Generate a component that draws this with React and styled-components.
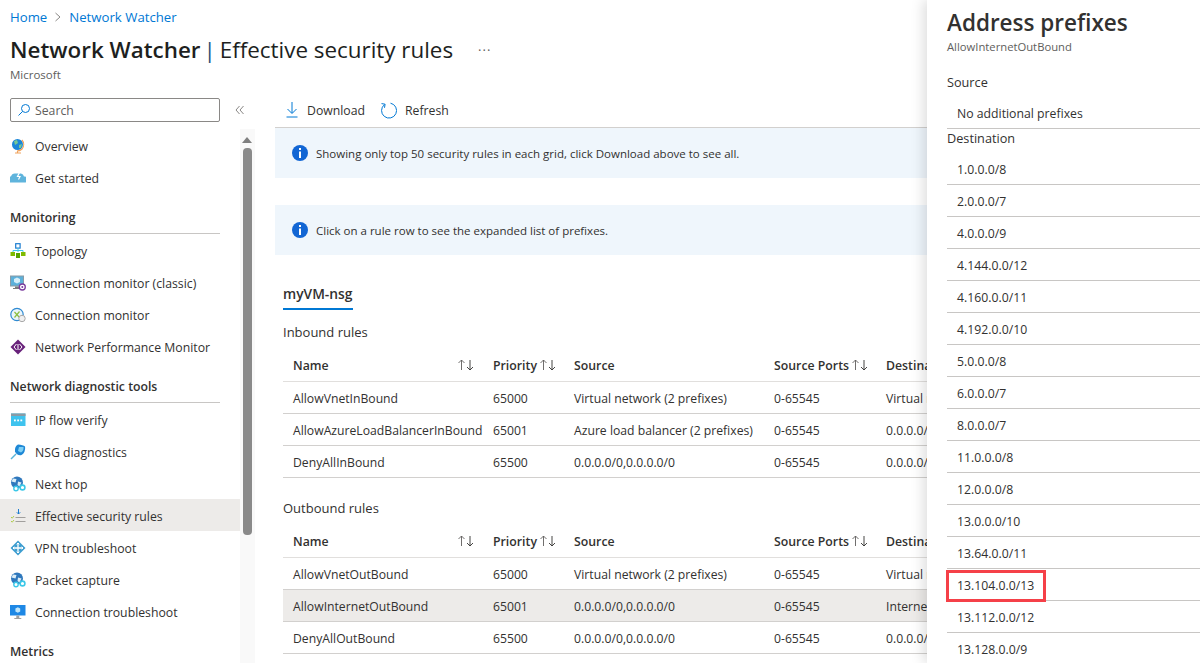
import React from "react";
import styled, { createGlobalStyle } from "styled-components";

const Global = createGlobalStyle`
  html, body { margin: 0; padding: 0; height: 100%; overflow: hidden; background: #fff; }
  body { font-family: "Open Sans", "Noto Sans", "Liberation Sans", sans-serif; font-size: 12.25px; color: #323130; }
`;

const Page = styled.div`
  position: relative;
  width: 1200px;
  height: 663px;
  overflow: hidden;
  display: flex;
  flex-direction: column;
`;
const Header = styled.header`
  height: 87px;
  padding: 8px 0 0 10px;
  box-sizing: border-box;
  flex: none;
`;
const Crumbs = styled.div`
  display: flex;
  align-items: center;
  gap: 7px;
  height: 17px;
  color: #0078d4;
  font-size: 13.2px;
`;
const TitleRow = styled.div`
  display: flex;
  align-items: center;
  height: 32px;
  margin-top: 8px;
  font-size: 22.4px;
  color: #201f1e;
  white-space: nowrap;
`;
const TitleStrong = styled.span`
  font-weight: 600;
`;
const TitleBar = styled.span`
  color: #1f4e79;
  margin: 0 4px 0 3px;
  font-weight: 400;
`;
const More = styled.span`
  font-size: 13px;
  letter-spacing: 1px;
  margin-left: 25px;
  color: #605e5c;
  transform: translateY(1px);
`;
const Sub = styled.div`
  font-size: 11.5px;
  color: #605e5c;
  line-height: 15px;
  margin-top: 2px;
`;
const Body = styled.div`
  flex: 1;
  min-height: 0;
  display: flex;
`;
const Side = styled.aside`
  width: 255px;
  flex: none;
  display: grid;
  grid-template-columns: 240px 15px;
  grid-template-rows: 42px 1fr;
`;
const SearchRow = styled.div`
  grid-column: 1 / 3;
  display: flex;
  align-items: flex-start;
  padding: 11px 0 0 10px;
  gap: 15px;
`;
const SearchBox = styled.div`
  width: 210px;
  height: 24px;
  box-sizing: border-box;
  border: 1px solid #8a8886;
  border-radius: 2px;
  display: flex;
  align-items: center;
  gap: 4px;
  padding-left: 6px;
  color: #605e5c;
`;
const Collapse = styled.span`
  display: flex;
  align-items: center;
  height: 24px;
`;
const Nav = styled.nav`
  overflow: hidden;
  display: flex;
  flex-direction: column;
`;
const NavItem = styled.div`
  height: 32px;
  flex: none;
  box-sizing: border-box;
  display: flex;
  align-items: center;
  gap: 9px;
  padding: 2px 0 0 10px;
  background: ${(p) => (p.$active ? "#edebe9" : "transparent")};
  white-space: nowrap;
`;
const NavGroup = styled.div`
  height: 41px;
  flex: none;
  box-sizing: border-box;
  margin: 0 20px 0 10px;
  border-bottom: 1px solid ${(p) => (p.$plain ? "transparent" : "#c8c6c4")};
  display: flex;
  align-items: flex-end;
  padding-bottom: 7px;
  font-weight: 600;
  color: #323130;
`;
const Gutter = styled.div`
  background: #f9f9f9;
  display: flex;
  flex-direction: column;
  align-items: center;
  width: 15px;
`;
const ArrowUp = styled.div`
  width: 0;
  height: 0;
  margin: 8px 0 0 -1px;
  border-left: 5px solid transparent;
  border-right: 5px solid transparent;
  border-bottom: 6px solid #7f7f7f;
`;
const Thumb = styled.div`
  width: 9px;
  height: 387px;
  margin: 5px 0 0 -1px;
  background: #8a8a8a;
  border-radius: 4px;
`;
const Main = styled.main`
  flex: 1;
  min-width: 0;
  padding: 11px 0 0 20px;
  overflow: hidden;
`;
const Toolbar = styled.div`
  height: 30px;
  display: flex;
  align-items: center;
  gap: 15px;
  border-bottom: 1px solid #d2d0ce;
  padding: 0 0 5px 9px;
  box-sizing: border-box;
`;
const ToolBtn = styled.div`
  display: flex;
  align-items: center;
  gap: ${(p) => p.$gap}px;
`;
const Info = styled.div`
  height: 50px;
  background: #eff6fc;
  display: flex;
  align-items: center;
  gap: 8px;
  padding-left: 17px;
  font-size: 11.5px;
  margin-bottom: ${(p) => p.$mb || 0}px;
`;
const TabBar = styled.div`
  padding: 30px 0 0 8px;
  display: flex;
`;
const Tab = styled.div`
  font-weight: 600;
  font-size: 13.8px;
  height: 25px;
  line-height: 18px;
  box-sizing: border-box;
  width: 70px;
  white-space: nowrap;
  border-bottom: 2px solid #0078d4;
`;
const RulesTitle = styled.div`
  margin-left: 8px;
  height: 18px;
  line-height: 18px;
  font-size: 13px;
  margin-top: ${(p) => p.$mt}px;
`;
const Table = styled.div`
  margin: 8px 0 0 8px;
  width: 800px;
`;
const gridCols = "210px 81px 200px 112px 1fr";
const HeadRow = styled.div`
  display: grid;
  grid-template-columns: ${gridCols};
  height: 33px;
  align-items: center;
  border-bottom: 1px solid #e1dfdd;
  box-sizing: border-box;
  font-weight: 600;
  font-size: 12.3px;
`;
const Row = styled.div`
  display: grid;
  grid-template-columns: ${gridCols};
  height: 32px;
  box-sizing: border-box;
  padding-top: 2px;
  align-items: center;
  border-bottom: 1px solid #d2d0ce;
  background: ${(p) => (p.$sel ? "#edebe9" : "transparent")};
  font-size: 12.2px;
  white-space: nowrap;
`;
const Cell = styled.div`
  padding-left: ${(p) => (p.$first ? 10 : 0)}px;
  white-space: nowrap;
  display: flex;
  align-items: center;
  gap: 2px;
  justify-content: ${(p) => (p.$spread ? "space-between" : "flex-start")};
  padding-right: ${(p) => (p.$spread ? 18 : 0)}px;
`;
const Panel = styled.aside`
  position: absolute;
  top: 0;
  right: 0;
  bottom: 0;
  width: 273px;
  box-sizing: border-box;
  background: #fff;
  box-shadow: -4px 0 12px rgba(0, 0, 0, 0.13);
  padding: 7px 0 0 20px;
  overflow: hidden;
`;
const PanelTitle = styled.h2`
  margin: 0;
  font-size: 22.5px;
  font-weight: 600;
  line-height: 32px;
  color: #323130;
`;
const PanelSub = styled.div`
  font-size: 11.25px;
  color: #605e5c;
  line-height: 16px;
`;
const Label = styled.div`
  height: 18px;
  line-height: 18px;
  font-size: 12.7px;
  margin-top: ${(p) => p.$mt}px;
`;
const Prefix = styled.div`
  position: relative;
  height: ${(p) => p.$h || 32}px;
  box-sizing: border-box;
  border-bottom: 1px solid #c8c6c4;
  padding-left: 10px;
  display: flex;
  align-items: center;
  padding-top: ${(p) => p.$pt || 2}px;
`;
const Highlight = styled.div`
  position: absolute;
  left: -1px;
  top: 1px;
  width: 100px;
  height: 32px;
  box-sizing: border-box;
  border: 3px solid #f54048;
`;

const I = ({ children, size = 16 }) => (
  <svg width={size} height={size} viewBox="0 0 16 16" style={{ flex: "none" }}>{children}</svg>
);
const Icons = {
  globe: <I><circle cx="7.5" cy="6.5" r="5.5" fill="#1a86d8"/><path d="M4 3l3-1 1 3-3 2zM9 7l3-1-1 4-2 0z" fill="#76c893"/><path d="M12 2a7 7 0 0 1 0 9 7 7 0 0 1-5 2M7.5 13v2M5 15h6" fill="none" stroke="#f0a35e" strokeWidth="1.2"/></I>,
  cloud: <I><path d="M1 12.5a3 3 0 0 1 0-6 4 4 0 0 1 4-3h6a4 4 0 0 1 3 3 3 3 0 0 1 1 6z" fill="#5fb4dc"/><path d="M9.5 2.5L7.5 6.5h2.5l-1.5 3" stroke="#fff" strokeWidth="1.2" fill="none"/></I>,
  topo: <I><rect x="5.7" y="0.7" width="4.4" height="4.4" fill="#fff" stroke="#1b7cd0" strokeWidth="1.2"/><path d="M8 5v4M3 9V7.5h10V9" stroke="#3cc8e8" fill="none"/><rect x="0.5" y="9" width="4.5" height="4" fill="#7fba00"/><rect x="6" y="10" width="4" height="5" fill="#57a300"/><rect x="11" y="9" width="4.5" height="4" fill="#7fba00"/></I>,
  monClassic: <I><rect x="0" y="0.5" width="14" height="11" fill="#8a9ba5"/><rect x="1" y="1.5" width="12" height="9" fill="#5cb0da"/><path d="M7 2.5l3 1.5v3L7 8.5 4 7V4z" fill="#d5eef9"/><path d="M5 11.5h4V13h2v1H3v-1h2z" fill="#7a7a7a"/><circle cx="12.3" cy="12" r="3" fill="#fff" stroke="#7a3b9e" strokeWidth="1.3"/><circle cx="12.3" cy="12" r="1" fill="#7a3b9e"/></I>,
  mon: <I><circle cx="7" cy="7.5" r="6.2" fill="#eaf5fb" stroke="#2f8ad2" strokeWidth="1.2"/><path d="M4.5 10.5l5-6M4.5 5l5 5.5" stroke="#8cbf3f" strokeWidth="1.2"/><circle cx="12" cy="11.5" r="3.2" fill="#f0f0f0" stroke="#a8a8a8"/></I>,
  npm: <I><path d="M8 0.5L15.5 8 8 15.5.5 8z" fill="#68217a"/><path d="M6.5 5L4 8l2.5 3M9.5 5L12 8l-2.5 3M8 5v6" fill="none" stroke="#fff"/></I>,
  ip: <I><rect x="1" y="1.5" width="14.5" height="12.5" fill="#3fc3ee"/><rect x="1" y="1.5" width="14.5" height="2.5" fill="#8a9ba5"/><rect x="4" y="7.5" width="1.8" height="1.8" fill="#fff"/><rect x="7.2" y="7.5" width="1.8" height="1.8" fill="#fff"/><rect x="10.4" y="7.5" width="1.8" height="1.8" fill="#fff"/></I>,
  nsg: <I><path d="M8 0.5c3 0 6 1 7 2 .5 3-.5 7-3.5 8.5C9 12 6 10 5 7.5 4.5 4 6 1.5 8 .5z" fill="#1e88d6"/><path d="M9 3h4.5c.3 2-.4 4.5-2.5 5.5L8 7z" fill="#7fd0f5"/><path d="M1 15l5-5" stroke="#59b4d9" strokeWidth="1.4"/></I>,
  hop: <I><circle cx="7" cy="6.5" r="6" fill="#2f78bd"/><path d="M3 2.5l3.5.5-1 3.5-4-1zM8 5.5l3.5 1-2 4-2-1.5z" fill="#dbeef8"/><circle cx="6" cy="12.5" r="2.2" fill="#fff" stroke="#3cc8e8" strokeWidth="1.4"/><circle cx="12.5" cy="11.5" r="2.4" fill="#fff" stroke="#3cc8e8" strokeWidth="1.6"/></I>,
  rules: <I><path d="M8.5 1v5M6.8 4.3l1.7 1.7 1.7-1.7" fill="none" stroke="#1b7cd0"/><path d="M1 9l1.2 1.2L4 8M1 13l1.2 1.2L4 12" fill="none" stroke="#b0cc50"/><path d="M5.5 9.5h10M5.5 13.5h10" stroke="#a19f9d" strokeWidth="1.2"/></I>,
  vpn: <I><path d="M8 .5L15.5 8 8 15.5.5 8z" fill="#3e9ed0"/><path d="M8 3v10M3 8h10" stroke="#fff" strokeWidth="1.3"/><path d="M6.7 4.3L8 3l1.3 1.3M6.7 11.7L8 13l1.3-1.3M4.3 6.7L3 8l1.3 1.3M11.7 6.7L13 8l-1.3 1.3" fill="none" stroke="#fff"/></I>,
  conn: <I><rect x="0" y="1" width="15.5" height="10.5" fill="#1e88e5"/><path d="M7.8 3.2l2.4 1.4v2.8L7.8 8.8 5.4 7.4V4.6z" fill="#bfe6fb"/><path d="M6.3 11.5h3V14h2v1h-7v-1h2z" fill="#a0a0a0"/></I>,
  search: <svg width="14" height="14" viewBox="0 0 14 14" style={{ flex: "none" }}><circle cx="8.5" cy="5.5" r="4" fill="none" stroke="#0078d4"/><path d="M5.5 8.5L1.5 12.5" stroke="#0078d4"/></svg>,
  download: <svg width="16" height="18" viewBox="0 0 16 18"><path d="M8 1v11M3.5 8L8 12.5 12.5 8M2.5 16h11" fill="none" stroke="#0078d4" strokeWidth="1"/></svg>,
  refresh: <svg width="17" height="17" viewBox="0 0 17 17"><path d="M4.5 2.6A7.5 7.5 0 1 0 10.5 1.2" fill="none" stroke="#0078d4" strokeWidth="1"/><path d="M1.5 1.6l3.6.6-.6 3.6" fill="none" stroke="#0078d4" strokeWidth="1"/></svg>,
  info: <svg width="16" height="16" viewBox="0 0 16 16" style={{ flex: "none" }}><circle cx="8" cy="8" r="8" fill="#1266d4"/><rect x="7" y="3" width="2" height="2" fill="#fff"/><rect x="7" y="6.5" width="2" height="6.5" fill="#fff"/></svg>,
  sort: <svg width="18" height="12" viewBox="0 0 18 12" style={{ flex: "none" }}><path d="M4.5 11V1M1.5 4l3-3 3 3" fill="none" stroke="#605e5c" strokeWidth="0.9"/><path d="M13 1v10M10 8l3 3 3-3" fill="none" stroke="#323130" strokeWidth="0.9"/></svg>,
  chevron: <svg width="8" height="10" viewBox="0 0 8 10"><path d="M1.5 1l4.5 4-4.5 4" fill="none" stroke="#8a8886"/></svg>,
  collapse: <svg width="10" height="10" viewBox="0 0 10 10"><path d="M4.5 1L1 5l3.5 4M8.5 1L5 5l3.5 4" fill="none" stroke="#8a8886"/></svg>,
};

const groupA = [["globe","Overview"],["cloud","Get started"]];
const groupB = [["topo","Topology"],["monClassic","Connection monitor (classic)"],["mon","Connection monitor"],["npm","Network Performance Monitor"]];
const groupC = [["ip","IP flow verify"],["nsg","NSG diagnostics"],["hop","Next hop"],["rules","Effective security rules",true],["vpn","VPN troubleshoot"],["hop","Packet capture"],["conn","Connection troubleshoot"]];

const inbound = [
  ["AllowVnetInBound","65000","Virtual network (2 prefixes)","0-65545","Virtual network"],
  ["AllowAzureLoadBalancerInBound","65001","Azure load balancer (2 prefixes)","0-65545","0.0.0.0/0,0.0.0.0/0"],
  ["DenyAllInBound","65500","0.0.0.0/0,0.0.0.0/0","0-65545","0.0.0.0/0,0.0.0.0/0"],
];
const outbound = [
  ["AllowVnetOutBound","65000","Virtual network (2 prefixes)","0-65545","Virtual network"],
  ["AllowInternetOutBound","65001","0.0.0.0/0,0.0.0.0/0","0-65545","Internet",true],
  ["DenyAllOutBound","65500","0.0.0.0/0,0.0.0.0/0","0-65545","0.0.0.0/0,0.0.0.0/0"],
];
const prefixes = ["1.0.0.0/8","2.0.0.0/7","4.0.0.0/9","4.144.0.0/12","4.160.0.0/11","4.192.0.0/10","5.0.0.0/8","6.0.0.0/7","8.0.0.0/7","11.0.0.0/8","12.0.0.0/8","13.0.0.0/10","13.64.0.0/11","13.104.0.0/13","13.112.0.0/12","13.128.0.0/9"];

const NavList = ({ items }) => items.map(([ic, label, active]) => (
  <NavItem key={label} $active={active}>{Icons[ic]}<span>{label}</span></NavItem>
));

const RulesTable = ({ rows }) => (
  <Table>
    <HeadRow>
      <Cell $first $spread>Name{Icons.sort}</Cell>
      <Cell>Priority{Icons.sort}</Cell>
      <Cell>Source</Cell>
      <Cell>Source Ports{Icons.sort}</Cell>
      <Cell>Destination</Cell>
    </HeadRow>
    {rows.map((r) => (
      <Row key={r[0]} $sel={r[5]}>
        <Cell $first>{r[0]}</Cell>
        <Cell>{r[1]}</Cell>
        <Cell>{r[2]}</Cell>
        <Cell>{r[3]}</Cell>
        <Cell>{r[4]}</Cell>
      </Row>
    ))}
  </Table>
);

export default function App() {
  return (
    <Page>
      <Global />
      <Header>
        <Crumbs><span>Home</span>{Icons.chevron}<span>Network Watcher</span></Crumbs>
        <TitleRow>
          <TitleStrong>Network Watcher</TitleStrong>
          <TitleBar>|</TitleBar>
          <span>Effective security rules</span>
          <More>···</More>
        </TitleRow>
        <Sub>Microsoft</Sub>
      </Header>
      <Body>
        <Side>
          <SearchRow>
            <SearchBox>{Icons.search}<span>Search</span></SearchBox>
            <Collapse>{Icons.collapse}</Collapse>
          </SearchRow>
          <Nav>
            <NavList items={groupA} />
            <NavGroup>Monitoring</NavGroup>
            <NavList items={groupB} />
            <NavGroup>Network diagnostic tools</NavGroup>
            <NavList items={groupC} />
            <NavGroup $plain>Metrics</NavGroup>
          </Nav>
          <Gutter><ArrowUp /><Thumb /></Gutter>
        </Side>
        <Main>
          <Toolbar>
            <ToolBtn $gap={7}>{Icons.download}<span>Download</span></ToolBtn>
            <ToolBtn $gap={8}>{Icons.refresh}<span>Refresh</span></ToolBtn>
          </Toolbar>
          <Info $mb={27}>{Icons.info}<span>Showing only top 50 security rules in each grid, click Download above to see all.</span></Info>
          <Info>{Icons.info}<span>Click on a rule row to see the expanded list of prefixes.</span></Info>
          <TabBar><Tab>myVM-nsg</Tab></TabBar>
          <RulesTitle $mt={13}>Inbound rules</RulesTitle>
          <RulesTable rows={inbound} />
          <RulesTitle $mt={21}>Outbound rules</RulesTitle>
          <RulesTable rows={outbound} />
        </Main>
      </Body>
      <Panel>
        <PanelTitle>Address prefixes</PanelTitle>
        <PanelSub>AllowInternetOutBound</PanelSub>
        <Label $mt={18}>Source</Label>
        <Prefix $h={38} $pt={7}>No additional prefixes</Prefix>
        <Label $mt={0}>Destination</Label>
        <Prefix $h={38} $pt={7}>1.0.0.0/8</Prefix>
        {prefixes.slice(1).map((p) => (
          <Prefix key={p}>
            {p}
            {p === "13.104.0.0/13" && <Highlight />}
          </Prefix>
        ))}
      </Panel>
    </Page>
  );
}
